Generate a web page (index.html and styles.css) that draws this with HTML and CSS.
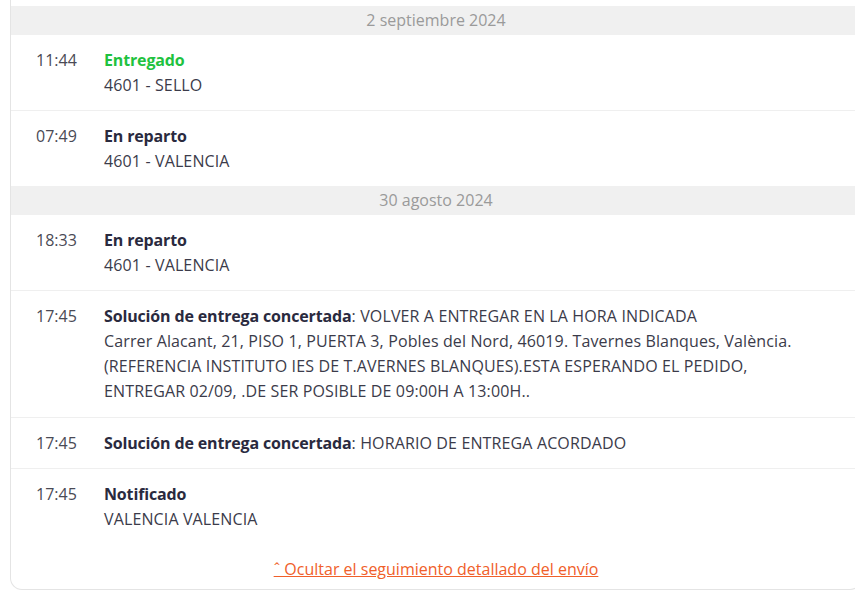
FILE: index.html
```html
<!DOCTYPE html>
<html lang="es">
<head>
<meta charset="utf-8">
<link rel="stylesheet" href="styles.css">
</head>
<body>
<div class="card">
  <div class="date">2 septiembre 2024</div>
  <div class="row">
    <div class="time">11:44</div>
    <div class="info"><div class="title green">Entregado</div><div>4601 - SELLO</div></div>
  </div>
  <div class="row last">
    <div class="time">07:49</div>
    <div class="info"><div class="title">En reparto</div><div>4601 - VALENCIA</div></div>
  </div>
  <div class="date">30 agosto 2024</div>
  <div class="row">
    <div class="time">18:33</div>
    <div class="info"><div class="title">En reparto</div><div>4601 - VALENCIA</div></div>
  </div>
  <div class="row tall">
    <div class="time">17:45</div>
    <div class="info"><div><span class="title">Solución de entrega concertada</span>: VOLVER A ENTREGAR EN LA HORA INDICADA</div><div>Carrer Alacant, 21, PISO 1, PUERTA 3, Pobles del Nord, 46019. Tavernes Blanques, València. (REFERENCIA INSTITUTO IES DE T.AVERNES BLANQUES).ESTA ESPERANDO EL PEDIDO, ENTREGAR 02/09, .DE SER POSIBLE DE 09:00H A 13:00H..</div></div>
  </div>
  <div class="row">
    <div class="time">17:45</div>
    <div class="info"><div><span class="title">Solución de entrega concertada</span>: HORARIO DE ENTREGA ACORDADO</div></div>
  </div>
  <div class="row last">
    <div class="time">17:45</div>
    <div class="info"><div class="title">Notificado</div><div>VALENCIA VALENCIA</div></div>
  </div>
  <div class="footer"><a class="toggle" href="#">ˆ Ocultar el seguimiento detallado del envío</a></div>
</div>
</body>
</html>
```
FILE: styles.css
```css
html, body {
  margin: 0;
  padding: 0;
  background: #ffffff;
  overflow: hidden;
}
body {
  width: 855px;
  height: 600px;
  font-family: "Open Sans", "Lato", sans-serif;
  font-size: 16px;
  color: #3b3b4a;
}
.card {
  margin-left: 10px;
  margin-top: -10px;
  width: 850px;
  padding-top: 16px;
  border: 1px solid #e4e4e4;
  border-top: none;
  border-radius: 0 0 12px 12px;
  background: #fff;
}
.date {
  height: 29px;
  line-height: 29px;
  background: #f0f0f0;
  text-align: center;
  color: #9a9a9a;
}
.row {
  display: flex;
  padding: 13px 0 12px;
  line-height: 25px;
  border-bottom: 1px solid #efefef;
}
.row.tall {
  padding-bottom: 13px;
}
.row.last {
  border-bottom: none;
}
.time {
  width: 68px;
  padding-left: 25px;
  flex: none;
  color: #4a4a55;
}
.info {
  flex: 1;
  padding-right: 50px;
  letter-spacing: 0.13px;
}
.title {
  font-weight: 700;
  color: #2a2a3e;
  letter-spacing: -0.15px;
}
.title.green {
  color: #1fc23f;
}
.footer {
  text-align: center;
  padding: 13px 0 7px;
  line-height: 25px;
}
.toggle {
  color: #f0602a;
  text-decoration: underline;
}
```
